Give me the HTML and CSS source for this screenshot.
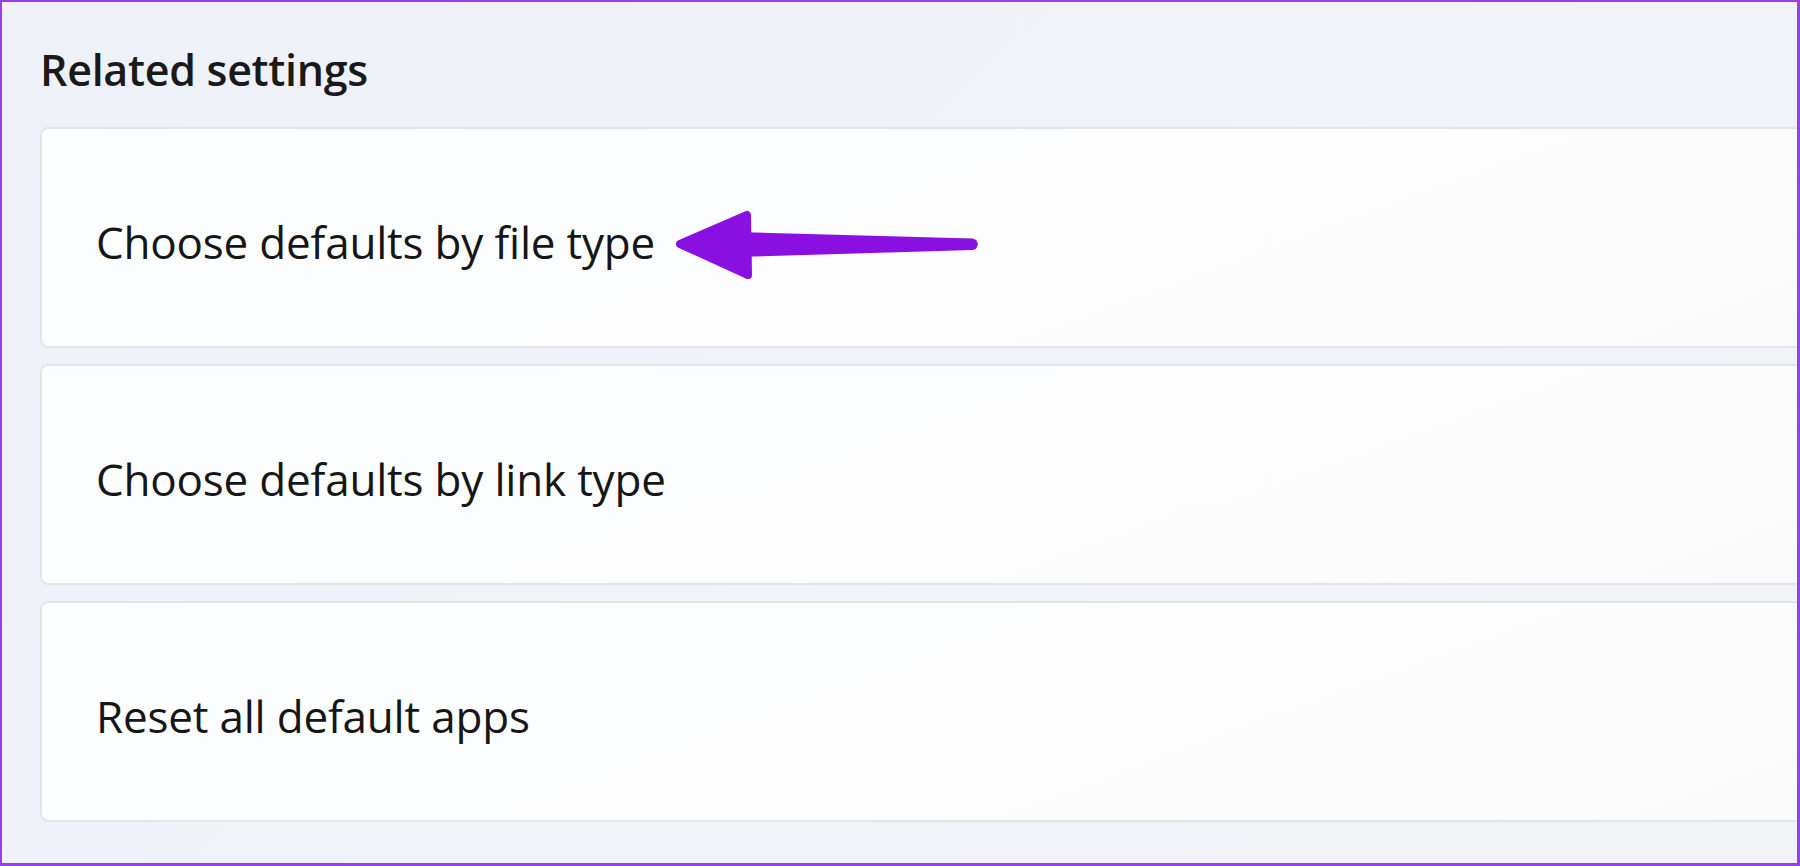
FILE: index.html
```html
<!DOCTYPE html>
<html lang="en">
<head>
<meta charset="utf-8">
<title>Related settings</title>
<link rel="stylesheet" href="styles.css">
</head>
<body>
<div class="frame">
  <h2 class="section-title">Related settings</h2>
  <div class="cards">
    <div class="card card-first">
      <span class="card-label">Choose defaults by file type</span>
      <svg class="arrow" width="330" height="90" viewBox="0 0 330 90" aria-hidden="true">
        <path d="M20 45 L87 16 L88 76 Z" fill="#8a10e2" stroke="#8a10e2" stroke-width="8" stroke-linejoin="round"/>
        <path d="M78 33 L312 39.5 L312 51 L78 58 Z" fill="#8a10e2"/>
        <circle cx="312" cy="45.3" r="5.8" fill="#8a10e2"/>
      </svg>
    </div>
    <div class="card">
      <span class="card-label">Choose defaults by link type</span>
    </div>
    <div class="card">
      <span class="card-label">Reset all default apps</span>
    </div>
  </div>
</div>
</body>
</html>
```

FILE: styles.css
```css
html, body {
  margin: 0;
  padding: 0;
}

body {
  width: 1800px;
  height: 866px;
  overflow: hidden;
  font-family: "Open Sans", "Noto Sans", sans-serif;
  color: #1b1b1b;
}

.frame {
  box-sizing: border-box;
  width: 1800px;
  height: 866px;
  border-top: 2px solid #9a3ee6;
  border-left: 2px solid #9a3ee6;
  border-right: 3px solid #9a3ee6;
  border-bottom: 3px solid #9a3ee6;
  background: linear-gradient(135deg, #eef2f8 0%, #f0f3f8 60%, #f2f3f7 100%);
  padding: 38px 0 0 38px;
  overflow: hidden;
}

.section-title {
  margin: 0;
  font-size: 43px;
  font-weight: 600;
  line-height: 60px;
  color: #1a1a1a;
  letter-spacing: -0.3px;
}

.cards {
  margin-top: 27px;
  margin-right: -30px;
  display: flex;
  flex-direction: column;
  gap: 16px;
}

.card {
  position: relative;
  box-sizing: border-box;
  height: 221px;
  border: 2px solid #e1e4e8;
  border-radius: 8px;
  background: linear-gradient(160deg, #fcfdfe 0%, #fcfcfd 70%, #fbfafb 100%);
  display: flex;
  align-items: center;
  padding: 8px 0 0 54px;
}

.card-label {
  font-size: 44px;
  font-weight: 400;
  line-height: 60px;
  color: #161616;
  letter-spacing: -0.2px;
}

.arrow {
  position: absolute;
  left: 618px;
  top: 70px;
}
```
